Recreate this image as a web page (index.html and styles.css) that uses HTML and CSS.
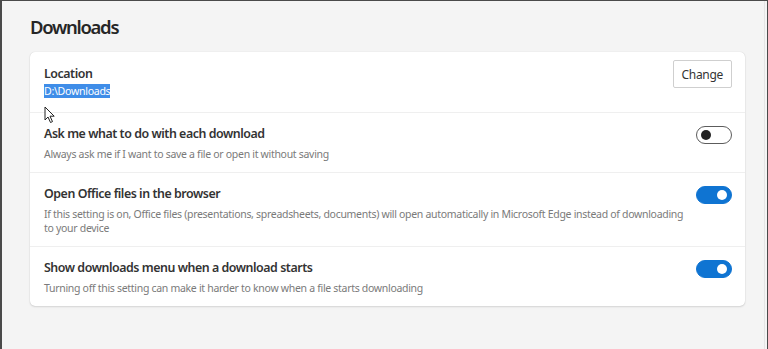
FILE: index.html
```html
<!DOCTYPE html>
<html>
<head>
<meta charset="utf-8">
<link rel="stylesheet" href="styles.css">
</head>
<body>
<div class="frame">
  <main class="page">
    <h1 class="heading">Downloads</h1>
    <section class="card">
      <div class="row row-location">
        <div class="text">
          <div class="title">Location</div>
          <div class="path"><span class="selected">D:\Downloads</span></div>
        </div>
        <button class="btn">Change</button>
      </div>
      <div class="row">
        <div class="text">
          <div class="title">Ask me what to do with each download</div>
          <div class="sub">Always ask me if I want to save a file or open it without saving</div>
        </div>
        <span class="toggle"></span>
      </div>
      <div class="row">
        <div class="text">
          <div class="title">Open Office files in the browser</div>
          <div class="sub">If this setting is on, Office files (presentations, spreadsheets, documents) will open automatically in Microsoft Edge instead of downloading to your device</div>
        </div>
        <span class="toggle on"></span>
      </div>
      <div class="row">
        <div class="text">
          <div class="title">Show downloads menu when a download starts</div>
          <div class="sub">Turning off this setting can make it harder to know when a file starts downloading</div>
        </div>
        <span class="toggle on"></span>
      </div>
      <svg class="cursor" width="12" height="18" viewBox="0 0 12 18"><path d="M1 1 L1 14 L4 11 L6.5 16.5 L8.5 15.6 L6 10.2 L10.2 10.2 Z" fill="#fff" stroke="#222" stroke-width="1" stroke-linejoin="round"/></svg>
    </section>
  </main>
  <div class="scroll"></div>
</div>
</body>
</html>
```
FILE: styles.css
```css
* { box-sizing: border-box; }
html, body { margin: 0; padding: 0; }
body {
  width: 768px;
  height: 349px;
  overflow: hidden;
  font-family: "Noto Sans", "Open Sans", sans-serif;
  background: #f4f4f4;
}
.frame {
  display: flex;
  height: 349px;
  border-left: 2px solid #4a4a4a;
  border-top: 1px solid #4a4a4a;
  border-right: 1px solid #4a4a4a;
}
.page {
  flex: 1;
  padding: 14px 19px 0 28px;
}
.scroll {
  width: 3px;
  border-left: 1px solid #e4e4e4;
}
.heading {
  margin: 0 0 13px 0;
  font-size: 18.5px;
  font-weight: 600;
  letter-spacing: -1.3px;
  color: #262626;
  line-height: 24px;
}
.card {
  position: relative;
  background: #fff;
  border-radius: 5px;
  box-shadow: 0 0 1px rgba(0,0,0,0.18), 0 1px 2px rgba(0,0,0,0.12);
}
.row {
  display: flex;
  align-items: flex-start;
  justify-content: space-between;
  padding: 12px 13px 11px 14px;
  border-top: 1px solid #efefef;
}
.row:first-child { border-top: none; }
.row-location { padding-top: 8px; padding-bottom: 14px; }
.text { flex: 1; padding-right: 8px; }
.title {
  font-size: 12.4px;
  font-weight: 600;
  letter-spacing: -0.45px;
  color: #333;
  line-height: 18px;
}
.row-location .title { margin-top: 5px; }
.path {
  margin-top: 2px;
  font-size: 10.6px;
  letter-spacing: -0.3px;
  line-height: 13px;
  color: #fff;
}
.selected { background: #3f8de8; color: #fff; }
.sub {
  margin-top: 4px;
  font-size: 10.5px;
  letter-spacing: -0.3px;
  line-height: 14px;
  color: #7a7a7a;
}
.btn {
  font-family: inherit;
  font-size: 12px;
  letter-spacing: -0.3px;
  color: #333;
  background: #fff;
  border: 1px solid #cfcfcf;
  border-radius: 2px;
  padding: 4px 8px;
  height: 28px;
}
.toggle {
  position: relative;
  flex: none;
  width: 36px;
  height: 18px;
  margin-top: 1px;
  border-radius: 9px;
  border: 1px solid #5c5c5c;
  background: #fff;
}
.toggle::after {
  content: "";
  position: absolute;
  top: 3px;
  left: 4px;
  width: 10px;
  height: 10px;
  border-radius: 50%;
  background: #222;
}
.toggle.on {
  background: #0f74d2;
  border-color: #0f74d2;
}
.toggle.on::after {
  left: auto;
  right: 4px;
  background: #fff;
}
.cursor {
  position: absolute;
  left: 14px;
  top: 54px;
}
```
